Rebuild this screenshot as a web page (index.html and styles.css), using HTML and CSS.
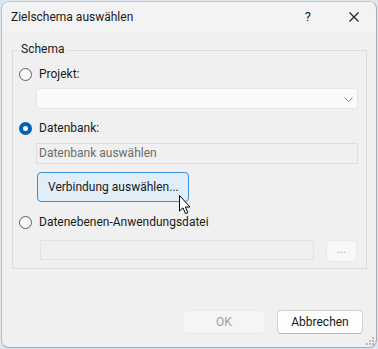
FILE: index.html
```html
<!DOCTYPE html>
<html lang="de">
<head>
<meta charset="utf-8">
<link rel="stylesheet" href="styles.css">
</head>
<body>
<div class="window">
  <div class="titlebar">
    <span class="title">Zielschema auswählen</span>
    <span class="help">?</span>
    <svg class="close" width="10" height="10" viewBox="0 0 10 10"><path d="M0.5 0.5 L9.5 9.5 M9.5 0.5 L0.5 9.5" stroke="#1a1a1a" stroke-width="1.1" fill="none"/></svg>
  </div>
  <div class="content">
    <div class="group">
      <span class="legend">Schema</span>
      <div class="radio-row r1">
        <span class="radio"></span><span class="label">Projekt:</span>
      </div>
      <div class="combo">
        <svg class="chev" width="9" height="5" viewBox="0 0 9 5"><path d="M0.5 0.5 L4.5 4.5 L8.5 0.5" stroke="#8a8a8a" stroke-width="1" fill="none"/></svg>
      </div>
      <div class="radio-row r2">
        <span class="radio checked"></span><span class="label">Datenbank:</span>
      </div>
      <div class="textbox">Datenbank auswählen</div>
      <div class="btn-row">
        <div class="btn-conn">Verbindung auswählen...</div>
      </div>
      <div class="radio-row r3">
        <span class="radio"></span><span class="label">Datenebenen-Anwendungsdatei</span>
      </div>
      <div class="file-row">
        <div class="filebox"></div>
        <div class="browse">...</div>
      </div>
    </div>
    <div class="footer">
      <div class="btn ok">OK</div>
      <div class="btn cancel">Abbrechen</div>
    </div>
  </div>
  <svg class="grip" width="8" height="8" viewBox="0 0 8 8">
    <rect x="6" y="0" width="2" height="2" fill="#b8b8b8"/>
    <rect x="3" y="3" width="2" height="2" fill="#b8b8b8"/>
    <rect x="6" y="3" width="2" height="2" fill="#b8b8b8"/>
    <rect x="0" y="6" width="2" height="2" fill="#b8b8b8"/>
    <rect x="3" y="6" width="2" height="2" fill="#b8b8b8"/>
    <rect x="6" y="6" width="2" height="2" fill="#b8b8b8"/>
  </svg>
  <svg class="cursor" width="13" height="20" viewBox="0 0 13 20"><path d="M0.5 0.5 L0.5 16 L4 12.8 L6.5 18.6 L8.8 17.6 L6.4 12 L11 12 Z" fill="#ffffff" stroke="#000000" stroke-width="1" stroke-linejoin="round"/></svg>
</div>
</body>
</html>
```
FILE: styles.css
```css
html, body {
  margin: 0;
  padding: 0;
}
body {
  width: 378px;
  height: 349px;
  background: #dde6ef;
  font-family: Roboto, "Noto Sans", "Liberation Sans", sans-serif;
  font-size: 12px;
  color: #000;
  padding: 1px 0 0 1px;
  box-sizing: border-box;
  overflow: hidden;
}
.window {
  position: relative;
  width: 376px;
  height: 347px;
  box-sizing: border-box;
  border: 1px solid #a9a9a9;
  border-top-color: #c8c8c8;
  border-left-color: #c0c0c0;
  border-radius: 8px;
  background: #f0f0f0;
  overflow: hidden;
}
.titlebar {
  height: 30px;
  background: #f3f3f3;
  display: flex;
  align-items: center;
  padding-left: 9px;
}
.title {
  flex: 1;
  font-size: 12px;
  color: #1a1a1a;
  margin-top: -1px;
}
.help {
  font-size: 13px;
  color: #1a1a1a;
  margin-right: 38px;
  margin-top: -1px;
}
.close {
  margin-right: 17px;
}
.content {
  padding: 18px 0 0 10px;
}
.group {
  position: relative;
  width: 355px;
  height: 219px;
  box-sizing: border-box;
  border: 1px solid #dcdcdc;
  padding: 15px 0 0 6px;
}
.legend {
  position: absolute;
  top: -10px;
  left: 6px;
  padding: 0 2px;
  background: #f0f0f0;
  line-height: 17px;
  color: #1a1a1a;
}
.radio-row {
  display: flex;
  align-items: center;
  height: 16px;
}
.radio {
  width: 13px;
  height: 13px;
  box-sizing: border-box;
  border: 1px solid #5e5e5e;
  border-radius: 50%;
  background: #f7f7f7;
  margin-right: 7px;
}
.radio.checked {
  border: 4px solid #005fb8;
  background: #ffffff;
}
.label {
  color: #1a1a1a;
  line-height: 16px;
}
.combo {
  position: relative;
  margin: 6px 0 0 17px;
  width: 322px;
  height: 21px;
  box-sizing: border-box;
  border: 1px solid #e6e6e6;
  border-radius: 3px;
  background: #fafafa;
}
.chev {
  position: absolute;
  right: 4px;
  top: 8px;
}
.r2 {
  margin-top: 11px;
}
.textbox {
  margin: 7px 0 0 17px;
  width: 322px;
  height: 21px;
  box-sizing: border-box;
  border: 1px solid #dedede;
  background: #f0f0f0;
  color: #6d6d6d;
  padding-left: 2px;
  line-height: 19px;
}
.btn-row {
  margin: 8px 0 0 18px;
  display: flex;
}
.btn-conn {
  width: 152px;
  height: 30px;
  box-sizing: border-box;
  border: 1px solid #3c8fdc;
  border-radius: 4px;
  background: #e0eef9;
  line-height: 28px;
  padding-left: 10px;
  color: #1a1a1a;
}
.r3 {
  margin-top: 12px;
}
.file-row {
  display: flex;
  margin: 10px 0 0 21px;
  align-items: flex-start;
}
.filebox {
  width: 274px;
  height: 20px;
  box-sizing: border-box;
  border: 1px solid #e3e3e3;
  background: #f0f0f0;
}
.browse {
  margin-left: 12px;
  width: 31px;
  height: 22px;
  box-sizing: border-box;
  border: 1px solid #ebebeb;
  border-radius: 4px;
  background: #f8f8f8;
  color: #a0a0a0;
  text-align: center;
  line-height: 18px;
  font-size: 11px;
}
.footer {
  display: flex;
  justify-content: flex-end;
  gap: 11px;
  margin-top: 41px;
  padding-right: 13px;
}
.btn {
  height: 24px;
  box-sizing: border-box;
  border-radius: 4px;
  text-align: center;
  line-height: 22px;
}
.ok {
  width: 84px;
  border: 1px solid #ebebeb;
  background: #f5f5f5;
  color: #a0a0a0;
}
.cancel {
  width: 86px;
  border: 1px solid #d0d0d0;
  border-bottom-color: #b8b8b8;
  background: #fdfdfd;
  color: #1a1a1a;
}
.grip {
  position: absolute;
  right: 2px;
  bottom: 2px;
}
.cursor {
  position: absolute;
  left: 177px;
  top: 193px;
}
```
